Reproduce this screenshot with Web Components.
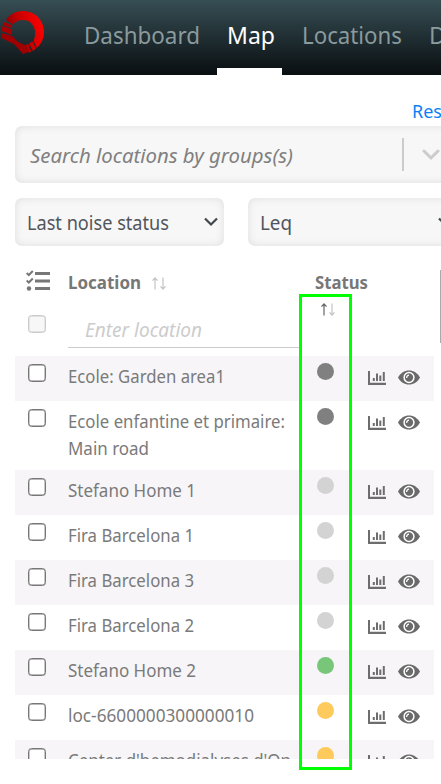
<!DOCTYPE html>
<html lang="en"><head><meta charset="utf-8"><title>Map</title>
<style>html,body{margin:0;height:100%;overflow:hidden;background:#fff}body{font-family:"Noto Sans","Open Sans",sans-serif}</style></head>
<body><map-page></map-page>
<script>
const make=(name,html,setup)=>customElements.define(name,class extends HTMLElement{
  connectedCallback(){
    if(this.shadowRoot)return;
    const r=this.attachShadow({mode:'open'});
    r.innerHTML=typeof html==='function'?html(this):html;
    if(setup)setup(this,r);
  }
});
/* Text run condensed to an exact advance width. */
make('ui-text',el=>`<style>:host{display:block;white-space:nowrap;font-size:${el.getAttribute('size')}px;width:${el.getAttribute('w')}px}span{display:inline-block;transform-origin:0 50%}</style><span><slot></slot></span>`,
(el,r)=>{const s=r.querySelector('span');
  s.style.transform=`scaleX(${(+el.getAttribute('w'))/s.getBoundingClientRect().width})`;});

make('app-logo',`<style>:host{display:block;width:46px;height:56px}svg{display:block}</style>
<svg width="46" height="56" viewBox="0 0 46 56"><defs><linearGradient id="g" x1="0" y1=".7" x2="1" y2=".4"><stop offset="0" stop-color="#820000"/><stop offset=".45" stop-color="#c80000"/><stop offset="1" stop-color="#ff0000"/></linearGradient></defs>
<path fill="url(#g)" d="M6 20C10 14 16 11 23 11C35 11 44 20.500 44 32C44 38.500 41 44.500 36.800 48L33.500 41C35 38 35.200 35 35 31C34 24.500 29.500 20 23 20C18.500 20 15 22 12.800 24.500Z"/>
<path fill="#a80000" d="M4.200 22L12 25.300L11 28L3 25Z"/><path fill="#a80000" d="M2.500 26L11.500 29.200L11 34.500L1.500 31Z"/>
<path fill="#a00000" d="M1 33L12 35.800L18 42L25 45L28.500 52L23 54L14 44L1.500 38Z"/>
<path fill="#b60000" d="M25.300 45L28.300 44L31.500 51.500L29 53Z"/><path fill="#d00000" d="M29 43.500L32.500 41.500L36 48.500L33 51Z"/></svg>`);

make('nav-link',`<style>:host{display:flex;flex:none;box-sizing:border-box;height:75px;padding:18px 10px 0;line-height:34px;color:#8a9a9d}:host([active]){color:#fff;padding-right:7px;border-bottom:7px solid #fff}</style><slot></slot>`);
make('top-bar',`<style>:host{display:flex;height:75px;overflow:hidden;background:linear-gradient(#364e54,#0b1013 97%)}app-logo{flex:none;margin-right:28px}nav{display:flex}.map{margin-left:7px}.loc{margin-left:10px}.d{margin-left:7px}</style>
<app-logo></app-logo><nav><nav-link><ui-text size="23.8" w="116">Dashboard</ui-text></nav-link><nav-link class="map" active><ui-text size="23.8" w="48">Map</ui-text></nav-link><nav-link class="loc"><ui-text size="23.8" w="100">Locations</ui-text></nav-link><nav-link class="d"><ui-text size="23.8" w="17">D</ui-text></nav-link></nav>`);

make('ui-field',`<style>:host{display:flex;box-sizing:border-box;flex:none;align-items:center;background:#f7f7f7;border-radius:7px;box-shadow:inset 0 0 8px rgba(0,0,0,.1);color:#50565c}</style><slot></slot>`);
make('ui-chevron',el=>{const b=el.hasAttribute('big');return `<style>:host{display:block;flex:none}svg{display:block}</style><svg width="${b?18:14}" height="${b?12:10}" viewBox="0 0 ${b?18:14} ${b?12:10}" fill="none" stroke="${b?'#ccc':'#43484d'}" stroke-width="${b?3:2.2}" stroke-linecap="${b?'round':'butt'}"><path d="${b?'M2 2L9 9L16 2':'M1 1.500L7 7.500L13 1.500'}"/></svg>`});
make('ui-check',`<style>:host{display:block;box-sizing:border-box;width:18px;height:18px;border:1px solid #777;border-radius:3.500px;background:#fff;box-shadow:inset 0 0 0 .4px #777}:host([off]){border-color:#ccc;background:#f7f7f7;box-shadow:inset 0 0 0 .4px #ccc}</style>`);
make('sort-arrows',el=>`<style>:host{display:block}svg{display:block}</style><svg width="16" height="13" viewBox="0 0 16 13" fill="none" stroke-width="1.200"><path stroke="${el.hasAttribute('up')?'#666':'#c4c4c4'}" d="M4 12.500V1.200M1.500 3.700L4 1L6.500 3.700"/><path stroke="#c4c4c4" d="M12 .5V11.800M9.500 9.300L12 12L14.500 9.300"/></svg>`);
make('icon-list',`<style>:host{display:block}svg{display:block}</style><svg width="25" height="22" viewBox="0 0 25 22"><g fill="#777"><rect x="9" y="2" width="15" height="3"/><rect x="9" y="9.500" width="15" height="3"/><rect x="9" y="17" width="15" height="3"/><circle cx="3" cy="18.500" r="2.200"/></g><path fill="none" stroke="#777" stroke-width="2" d="M.6 3L2.800 5L6.800 1M.6 10.500L2.800 12.500L6.800 8.500"/></svg>`);
make('icon-chart',`<style>:host{display:block}svg{display:block}</style><svg width="18" height="14" viewBox="0 0 18 14" fill="#6d6d6d"><path d="M0 0H2V11.800H18V14H0ZM4.800 7H6.800V10H4.800ZM8 2.500H10V10H8ZM11.300 4.500H13.300V10H11.300ZM14.800 1H16.800V10H14.800Z"/></svg>`);
make('icon-eye',`<style>:host{display:block}svg{display:block}</style><svg width="22" height="15" viewBox="0 0 22 15"><path fill="#6a6a6a" d="M0 7.500C2.300 3 6.500 .4 11 .4S19.700 3 22 7.500C19.700 12 15.500 14.600 11 14.600S2.300 12 0 7.500Z"/><circle cx="11" cy="7.500" r="4.900" fill="none" stroke="#fff" stroke-width="1.500"/><path fill="none" stroke="#fff" stroke-width="1.300" d="M8.600 8A2.600 2.600 0 0 1 11 5.200"/></svg>`);

make('location-row',el=>`<style>:host{display:grid;box-sizing:border-box;grid-template-columns:52.500px 234.500px 66px 30px 36px;min-height:45px;padding-bottom:8px;align-items:start;color:#7a7a7a;line-height:27px}:host(:nth-of-type(odd)){background:#f7f5f7}ui-check{margin:8px 0 0 13px}.name{padding-top:7px}.dot{width:17px;height:17px;border-radius:50%;margin:7px 0 0 15px;background:${el.getAttribute('color')}}icon-chart{margin-top:15px}icon-eye{margin-top:14px}</style>
<ui-check></ui-check><div class="name"><slot></slot></div><div class="dot"></div><icon-chart></icon-chart><icon-eye></icon-eye>`);

make('table-head',`<style>:host{display:grid;grid-template-columns:52.500px 232.500px 1fr;height:90px;color:#777;font-weight:700;line-height:27px}icon-list{margin:4px 0 23px 11px}ui-check{margin-left:13px}.title{display:flex;height:31px;align-items:center;padding-top:1px}.title sort-arrows{margin:1px 0 0 10px}.input{height:47px;box-sizing:border-box;padding:15px 0 0 17px;margin-top:3px;border-bottom:1px solid #ccc;color:#ccc;font-weight:400;font-style:italic}.st{padding:1px 0 0 14.500px}.st sort-arrows{margin:7px 0 0 5.500px}.st ui-text{margin-top:2px}</style>
<div><icon-list></icon-list><ui-check off></ui-check></div>
<div><div class="title"><ui-text size="17.8" w="73">Location</ui-text><sort-arrows></sort-arrows></div><div class="input"><ui-text size="19.3" w="117">Enter location</ui-text></div></div>
<div class="st"><ui-text size="17.8" w="53">Status</ui-text><sort-arrows up></sort-arrows></div>`);
make('location-table',()=>{
 const rows=[['#808080',['Ecole: Garden area1',157]],['#808080',['Ecole enfantine et primaire:',217],['Main road',81]],['#d3d3d3',['Stefano Home 1',128]],['#d3d3d3',['Fira Barcelona 1',126]],['#d3d3d3',['Fira Barcelona 3',126]],['#d3d3d3',['Fira Barcelona 2',126]],['#77c67a',['Stefano Home 2',128]],['#ffca5c',['loc-6600000300000010',186]],['#ffca5c',["Center d'hemodialyses d'On",223]]];
 return `<style>:host{display:block;width:419px;height:493px;overflow:hidden;margin:20px 0 0 15px}</style><table-head></table-head>`+rows.map(([c,...l])=>`<location-row color="${c}">${l.map(([t,w])=>`<ui-text size="18" w="${w}">${t}</ui-text>`).join('')}</location-row>`).join('')});

make('map-page',`<style>:host{display:block;position:relative;width:441px;height:784px;overflow:hidden}.reset{padding:22px 0 0 412px;height:29px;line-height:27px;color:#0b7ff5}.search{width:450px;height:57px;margin-left:15px;padding-left:15px;color:#808080;font-style:italic}.sep{width:2px;height:33px;background:#ccc;margin:0 18px 0 109px}.filters{display:flex;gap:24px;padding:15px 0 0 15px}.filters ui-field{height:48px;padding-left:12px}.a{width:209px}.a ui-chevron{margin-left:35px}.b{width:209px}.b ui-chevron{margin-left:146px}.mark{position:absolute;box-sizing:border-box;left:299px;top:294px;width:53px;height:476px;border:3px solid #0f0}.scroll{position:absolute;left:440px;top:270px;width:2px;height:73px;background:#aaa}</style>
<top-bar></top-bar><div class="reset"><ui-text size="18.7" w="30">Res</ui-text></div>
<ui-field class="search"><ui-text size="20.6" w="263">Search locations by groups(s)</ui-text><div class="sep"></div><ui-chevron big></ui-chevron></ui-field>
<div class="filters"><ui-field class="a"><ui-text size="19.3" w="142">Last noise status</ui-text><ui-chevron></ui-chevron></ui-field><ui-field class="b"><ui-text size="19.3" w="32">Leq</ui-text><ui-chevron></ui-chevron></ui-field></div>
<location-table></location-table><div class="scroll"></div><div class="mark"></div>`);
</script></body></html>
